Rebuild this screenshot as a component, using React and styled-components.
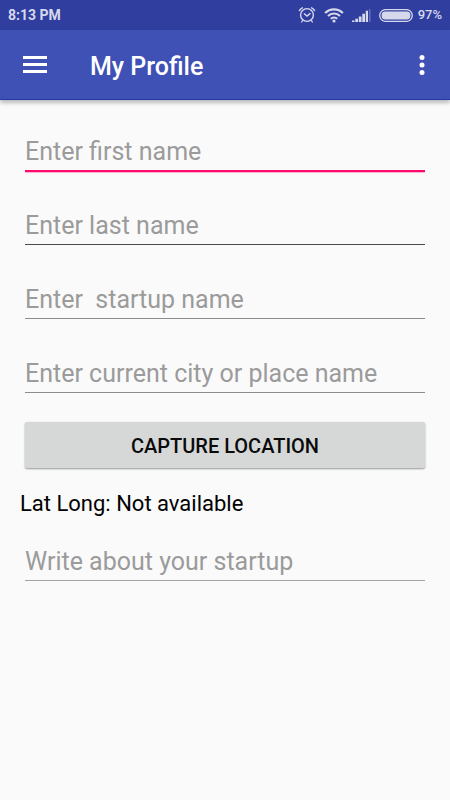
import React from "react";
import styled, { createGlobalStyle, css } from "styled-components";

const GlobalStyle = createGlobalStyle`
  * { box-sizing: border-box; }
  body {
    margin: 0;
    background: #fafafa;
    color: #000;
    font-family: Roboto, "Noto Sans", sans-serif;
  }
`;

const Page = styled.div`
  display: flex;
  flex-direction: column;
  min-height: 100vh;
`;

const StatusBar = styled.div`
  display: flex;
  align-items: center;
  justify-content: space-between;
  height: 30px;
  padding: 0 8px;
  background: #303f9f;
  color: #d6d9ec;
  font-size: 14px;
  font-weight: 700;
  line-height: 16px;
`;

const StatusIcons = styled.div`
  display: flex;
  align-items: center;
  gap: 8px;

  svg { display: block; }
`;

const Battery = styled.div`
  display: flex;
  align-items: center;
  gap: 5px;
  font-size: 13px;
  font-weight: 500;
`;

const AppBar = styled.header`
  display: flex;
  align-items: center;
  height: 70px;
  padding: 0 10px;
  background: #3f51b5;
  border-bottom: 1px solid #2339a5;
  box-shadow: 0 3px 4px rgba(0, 0, 0, 0.25);
  color: #fff;
`;

const IconButton = styled.button`
  display: grid;
  place-items: center;
  width: ${(p) => p.$width}px;
  height: 49px;
  padding: 0;
  border: 0;
  background: none;
  color: inherit;
  cursor: pointer;
`;

const Title = styled.h1`
  flex: 1;
  margin: 0;
  padding: 5px 0 0 30px;
  font-size: 25px;
  font-weight: 500;
  line-height: 30px;
`;

const Form = styled.form`
  display: flex;
  flex-direction: column;
  padding: 27px 25px;
`;

const Fields = styled.div`
  display: flex;
  flex-direction: column;
  gap: 30px;
`;

const Field = styled.input`
  width: 100%;
  height: 44px;
  padding: 6px 0 0;
  border: 0;
  border-bottom: 1px solid ${(p) => p.$line || "#8c8c8c"};
  border-radius: 0;
  outline: none;
  background: transparent;
  color: #000;
  font-family: inherit;
  font-size: 25px;
  line-height: 30px;

  &::placeholder { color: #9b9b9b; opacity: 1; }

  ${(p) =>
    p.$active &&
    css`
      border-bottom-color: #ff0a6c;
      box-shadow: 0 1px #ff0a6c, 0 2px #ffb0cf;
    `}
`;

const CaptureButton = styled.button`
  height: 46px;
  margin: 29px 0 21px;
  padding: 2px 0 0;
  border: 0;
  border-radius: 2px;
  background: #d6d7d7;
  box-shadow: 0 1px 2px rgba(0, 0, 0, 0.4);
  color: #0a0a0a;
  font-family: inherit;
  font-size: 20px;
  font-weight: 500;
  line-height: 24px;
  text-transform: uppercase;
  cursor: pointer;
`;

const Coordinates = styled.p`
  margin: 0 0 18px -5px;
  font-size: 22px;
  line-height: 30px;
`;

const AlarmIcon = () => (
  <svg width="18" height="18" viewBox="0 0 18 18" fill="none" stroke="currentColor" strokeLinecap="round" aria-label="Alarm">
    <circle cx="9" cy="9" r="6.4" strokeWidth="1.4" />
    <path d="M6.3 7.8 9 10l3-2.4" strokeWidth="1.4" />
    <path d="M1.4 4.600Q2.400 2.600 4.400 1.800M16.600 4.600Q15.600 2.600 13.600 1.800" strokeWidth="1.4" />
    <path d="m4.6 14.6-1 1.4M13.4 14.6l1 1.400" strokeWidth="1.2" />
  </svg>
);

const WifiIcon = () => (
  <svg width="20" height="16" viewBox="0 0 20 16" fill="none" stroke="currentColor" strokeWidth="2.1" aria-label="Wi-Fi">
    <path d="M1.1 6.1a12.6 12.6 0 0 1 17.8 0" />
    <path d="M4 9a8.5 8.5 0 0 1 12 0" />
    <path d="M6.8 11.8a4.5 4.5 0 0 1 6.4 0" />
    <circle cx="10" cy="14" r="1.6" fill="currentColor" stroke="none" />
  </svg>
);

const SignalIcon = () => (
  <svg width="19" height="14" viewBox="0 0 19 14" fill="currentColor" aria-label="Signal">
    <path d="M0 12.600h2.500V14H0zM3.300 10.800h2.700V14H3.300zM6.800 8.400h2.700V14H6.800zM10.300 5.700h2.700V14h-2.700zM13.800 2.800h2.200V14h-2.200z" />
    <path d="M17 1h1.500v13H17z" opacity="0.3" />
  </svg>
);

const BatteryIcon = () => (
  <svg width="34" height="13" viewBox="0 0 34 13" aria-label="Battery">
    <rect x="0.7" y="0.7" width="32.6" height="11.6" rx="5.8" fill="none" stroke="currentColor" strokeWidth="1.3" />
    <rect x="2.6" y="2.6" width="28.8" height="7.8" rx="3.7" fill="currentColor" />
  </svg>
);

const MenuIcon = () => (
  <svg width="24" height="17" viewBox="0 0 24 17" fill="currentColor" aria-hidden="true">
    <path d="M0 0h24v3H0zM0 7h24v3H0zM0 14h24v3H0z" />
  </svg>
);

const MoreIcon = () => (
  <svg width="6" height="21" viewBox="0 0 6 21" fill="currentColor" aria-hidden="true">
    <circle cx="3" cy="3.5" r="2.5" />
    <circle cx="3" cy="11" r="2.5" />
    <circle cx="3" cy="18.500" r="2.5" />
  </svg>
);

export default function App() {
  return (
    <Page>
      <GlobalStyle />
      <StatusBar>
        <span>8:13 PM</span>
        <StatusIcons>
          <AlarmIcon />
          <WifiIcon />
          <SignalIcon />
          <Battery>
            <BatteryIcon />
            <span>97%</span>
          </Battery>
        </StatusIcons>
      </StatusBar>
      <AppBar>
        <IconButton type="button" $width={50} aria-label="Open menu">
          <MenuIcon />
        </IconButton>
        <Title>My Profile</Title>
        <IconButton type="button" $width={36} aria-label="More options">
          <MoreIcon />
        </IconButton>
      </AppBar>
      <Form onSubmit={(event) => event.preventDefault()}>
        <Fields>
          <Field $active aria-label="First name" placeholder="Enter first name" />
          <Field $line="#4a4a4a" aria-label="Last name" placeholder="Enter last name" />
          <Field aria-label="Startup name" placeholder={"Enter \u00a0startup name"} />
          <Field aria-label="Current city or place name" placeholder="Enter current city or place name" />
        </Fields>
        <CaptureButton type="button">Capture location</CaptureButton>
        <Coordinates>Lat Long: Not available</Coordinates>
        <Field $line="#a3a3a3" aria-label="About your startup" placeholder="Write about your startup" />
      </Form>
    </Page>
  );
}
